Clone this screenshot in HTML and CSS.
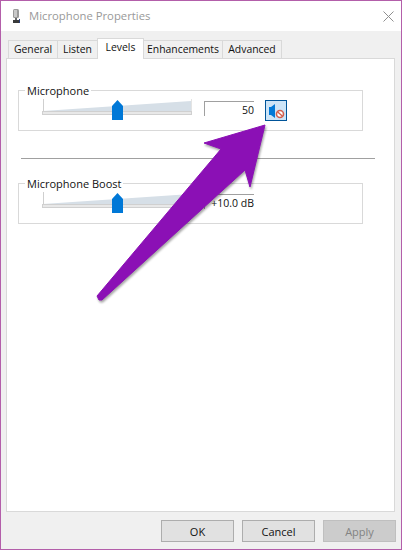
FILE: index.html
```html
<!DOCTYPE html>
<html lang="en">
<head>
    <meta charset="UTF-8">
    <meta name="viewport" content="width=device-width, initial-scale=1.0">
    <title>Microphone Properties</title>
    <link rel="stylesheet" href="styles.css">
</head>
<body>
    <div class="window">
        <div class="titlebar">
            <svg class="mic-icon" width="10" height="15" viewBox="0 0 10 15">
                <rect x="1" y="0" width="6" height="9" rx="1.5" fill="#9a9a9a"/>
                <rect x="2" y="1" width="3" height="7" fill="#c9c9c9"/>
                <rect x="3" y="9" width="2" height="2" fill="#666"/>
                <rect x="1" y="11" width="6" height="3" fill="#3a3a3a"/>
                <rect x="7" y="10" width="1" height="4" fill="#2b3f7d"/>
            </svg>
            <span class="title">Microphone Properties</span>
            <svg class="close-icon" width="11" height="11" viewBox="0 0 11 11">
                <path d="M0.5 0.5L10.5 10.5M10.5 0.5L0.5 10.5" stroke="#8f8f8f" stroke-width="1" fill="none"/>
            </svg>
        </div>

        <div class="tabs">
            <div class="tab tab-general">General</div>
            <div class="tab tab-listen">Listen</div>
            <div class="tab tab-levels active">Levels</div>
            <div class="tab tab-enh">Enhancements</div>
            <div class="tab tab-adv">Advanced</div>
        </div>

        <div class="page">
            <fieldset class="group">
                <legend>Microphone</legend>
                <div class="row">
                    <svg class="slider" width="150" height="22" viewBox="0 0 150 22">
                        <polygon points="1,12 149,2 149,13 1,13" fill="#d6dfe7"/>
                        <rect x="1" y="0" width="1" height="12" fill="#cfcfcf"/>
                        <rect x="149" y="0" width="1" height="13" fill="#e4e4e4"/>
                        <rect x="0.5" y="12.5" width="149" height="3" fill="#e8e8e8" stroke="#d0d0d0"/>
                        <polygon points="70,7 75.5,1 81,7 81,21 70,21" fill="#0078d7"/>
                    </svg>
                    <div class="level">50</div>
                    <div class="mute">
                        <svg width="20" height="19" viewBox="0 0 20 19">
                            <polygon points="3,6 5,6 9,3 9,17 5,14 3,14" fill="#0078d7"/>
                            <circle cx="14" cy="13" r="3.5" fill="#fff" stroke="#d2604f" stroke-width="1.6"/>
                            <path d="M11.5 10.8L16.5 15.2" stroke="#d2604f" stroke-width="1.4"/>
                        </svg>
                    </div>
                </div>
            </fieldset>

            <div class="divider"></div>

            <fieldset class="group">
                <legend>Microphone Boost</legend>
                <div class="row">
                    <svg class="slider" width="150" height="22" viewBox="0 0 150 22">
                        <polygon points="1,12 149,2 149,13 1,13" fill="#d6dfe7"/>
                        <rect x="1" y="0" width="1" height="12" fill="#cfcfcf"/>
                        <rect x="0.5" y="12.5" width="149" height="3" fill="#e8e8e8" stroke="#d0d0d0"/>
                        <polygon points="70,7 75.5,1 81,7 81,21 70,21" fill="#0078d7"/>
                    </svg>
                    <div class="level">+10.0 dB</div>
                </div>
            </fieldset>
        </div>

        <div class="buttons">
            <button type="button">OK</button>
            <button type="button">Cancel</button>
            <button type="button" disabled>Apply</button>
        </div>

        <!-- annotation drawn over the dialog -->
        <svg class="arrow" width="402" height="550" viewBox="0 0 402 550">
            <polygon points="265,125 204,143 221,149 97,296 99,300 102,300 245,170 250,187" fill="#8b10b5" stroke="#8b10b5" stroke-width="1" stroke-linejoin="round"/>
        </svg>
    </div>
</body>
</html>
```

FILE: styles.css
```css
body {
    margin: 0;
    font-family: "Open Sans", Arial, sans-serif;
    font-size: 11px;
    color: #111;
}
.window {
    position: relative;
    width: 402px;
    height: 550px;
    box-sizing: border-box;
    border: 1px solid #b35eaa;
    background-color: #f0f0f0;
    overflow: hidden;
}
.titlebar {
    display: flex;
    align-items: center;
    height: 30px;
    padding: 0 7px 0 11px;
    background-color: white;
}
.mic-icon {
    margin-right: 7px;
}
.title {
    flex: 1;
    padding-bottom: 2px;
    font-size: 11.3px;
    color: #999;
}
.tabs {
    display: flex;
    align-items: flex-end;
    height: 27px;
    margin-left: 7px;
    font-size: 10.4px;
}
.tab {
    box-sizing: border-box;
    height: 18px;
    line-height: 17px;
    text-align: center;
    border: 1px solid #d9d9d9;
    border-bottom: none;
    margin-right: -1px;
}
.tab-general { width: 50px; }
.tab-listen { width: 41px; }
.tab-levels { width: 47px; }
.tab-enh { width: 80px; }
.tab-adv { width: 60px; }
.tab.active {
    position: relative;
    height: 21px;
    margin-bottom: -1px;
    line-height: 17px;
    background-color: white;
}
.page {
    box-sizing: border-box;
    width: 389px;
    height: 454px;
    margin-left: 5px;
    padding: 23px 11px 0;
    border: 1px solid #d9d9d9;
    background-color: white;
}
.group {
    box-sizing: border-box;
    width: 345px;
    height: 49px;
    margin: 0;
    padding: 0 0 0 23px;
    border: 1px solid #d9d9d9;
    min-width: 0;
}
.group legend {
    margin-left: -17px;
    padding: 1px 2px 0;
    line-height: 15px;
}
.row {
    display: flex;
    align-items: flex-start;
    padding-top: 1px;
}
.slider {
    display: block;
    flex: none;
}
.level {
    box-sizing: border-box;
    width: 50px;
    height: 15px;
    margin: 2px 0 0 12px;
    border-top: 1px solid #a0a0a0;
    border-left: 1px solid #a0a0a0;
    font-size: 10.5px;
    line-height: 17px;
    text-align: right;
}
.mute {
    box-sizing: border-box;
    width: 22px;
    height: 21px;
    margin: 1px 0 0 11px;
    border: 1px solid #005499;
    background-color: #cce4f7;
}
.mute svg {
    display: block;
}
.divider {
    width: 354px;
    height: 1px;
    margin: 27px 0 16px 3px;
    background-color: #a0a0a0;
}
.buttons {
    display: flex;
    justify-content: flex-end;
    gap: 8px;
    padding: 8px 5px 0 0;
}
button {
    box-sizing: border-box;
    width: 73px;
    height: 22px;
    padding: 0;
    border: 1px solid #adadad;
    background-color: #e1e1e1;
    font-family: inherit;
    font-size: 11px;
    color: #111;
}
button:disabled {
    border-color: #bfbfbf;
    background-color: #ccc;
    color: #838383;
}
.arrow {
    position: absolute;
    left: -1px;
    top: -1px;
    filter: drop-shadow(1px 2px 1px rgba(0,0,0,0.35));
}
```
